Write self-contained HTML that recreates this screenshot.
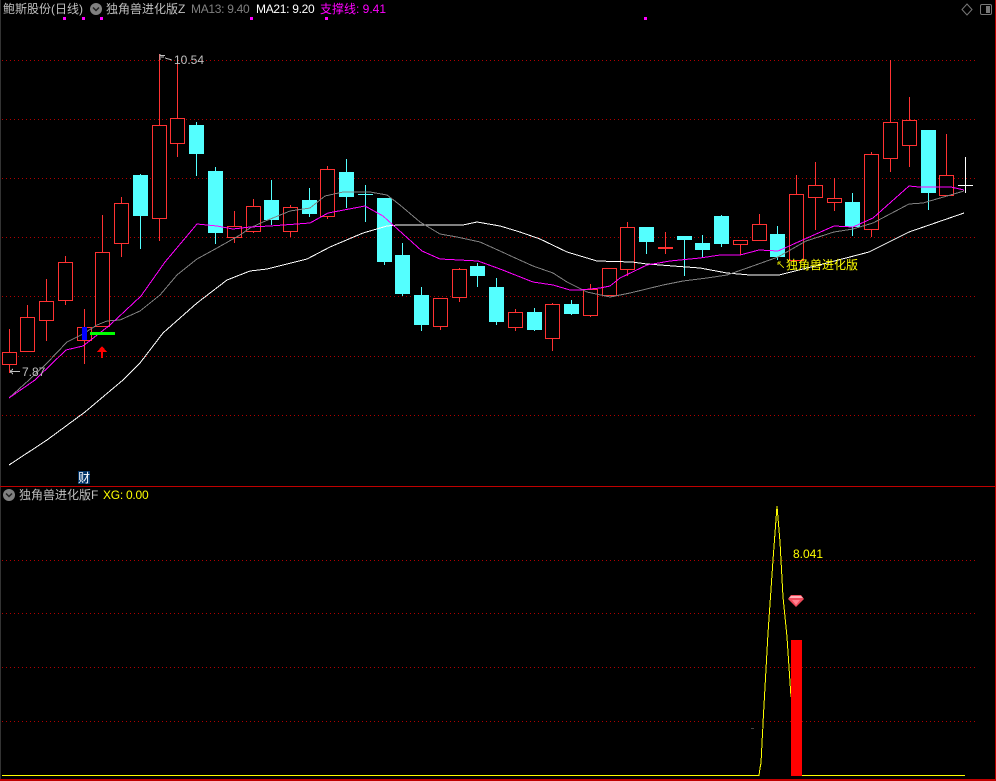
<!DOCTYPE html>
<html><head><meta charset="utf-8">
<style>
html,body{margin:0;padding:0;background:#000;}
body{width:996px;height:781px;overflow:hidden;position:relative;}
svg{position:absolute;left:0;top:0;}
.t{position:absolute;white-space:nowrap;font:12px/14px "Liberation Sans","WenQuanYi Zen Hei","Noto Sans CJK SC",sans-serif;}
.g{color:#c0c0c0}
</style></head><body>
<svg width="996" height="781" viewBox="0 0 996 781" shape-rendering="crispEdges" fill="none">
<rect x="0" y="0" width="1" height="781" fill="#333"/>
<rect x="995" y="0" width="1" height="781" fill="#c00000"/>
<rect x="0" y="486" width="996" height="1" fill="#c00000"/>
<rect x="0" y="779" width="996" height="2" fill="#c00000"/>
<path stroke="#b00000" stroke-dasharray="1 3" d="M2 60.5H975M2 119.5H975M2 178.5H975M2 237.5H975M2 296.5H975M2 356.5H975M2 415.5H975M2 560.5H975M2 613.5H975M2 667.5H975M2 721.5H975"/>
<!-- red candles -->
<g stroke="#ff3232" fill="#000">
<path d="M9.5 329V373M27.5 305V318M46.5 279V341M65.5 256V305M84.5 309V364M102.5 215V253M121.5 197V257M159.5 54V241M177.5 57V157M234.5 211V243M253.5 199V233M290.5 205V237M327.5 166V219M440.5 326V330M459.5 268V302M515.5 309V331M552.5 303V351M590.5 284V317M627.5 222V276M740.5 244V255M759.5 214V225M796.5 175V195M815.5 162V230M834.5 178V211M871.5 152V237M890.5 60V172M909.5 97V167M946.5 134V176M665.5 232V254"/>
<rect x="2.5" y="352.5" width="14" height="12"/><rect x="20.5" y="317.5" width="14" height="34"/><rect x="39.5" y="301.5" width="14" height="19"/><rect x="58.5" y="262.5" width="14" height="38"/><rect x="77.5" y="327.5" width="14" height="13"/><rect x="95.5" y="252.5" width="14" height="74"/><rect x="114.5" y="203.5" width="14" height="40"/><rect x="152.5" y="125.5" width="14" height="93"/><rect x="170.5" y="118.5" width="14" height="25"/><rect x="227.5" y="226.5" width="14" height="11"/><rect x="246.5" y="206.5" width="14" height="25"/><rect x="283.5" y="207.5" width="14" height="24"/><rect x="320.5" y="169.5" width="14" height="47"/><rect x="433.5" y="298.5" width="14" height="28"/><rect x="452.5" y="269.5" width="14" height="28"/><rect x="508.5" y="312.5" width="14" height="15"/><rect x="545.5" y="304.5" width="14" height="34"/><rect x="583.5" y="289.5" width="14" height="26"/><rect x="602.5" y="268.5" width="14" height="27"/><rect x="620.5" y="227.5" width="14" height="42"/><rect x="733.5" y="240.5" width="14" height="4"/><rect x="752.5" y="224.5" width="14" height="16"/><rect x="789.5" y="194.5" width="14" height="66"/><rect x="808.5" y="185.5" width="14" height="12"/><rect x="827.5" y="198.5" width="14" height="4"/><rect x="864.5" y="154.5" width="14" height="75"/><rect x="883.5" y="122.5" width="14" height="36"/><rect x="902.5" y="120.5" width="14" height="25"/><rect x="939.5" y="175.5" width="14" height="20"/>
</g>
<rect x="658" y="247" width="15" height="2" fill="#ff3232"/>
<!-- cyan candles -->
<path stroke="#54ffff" d="M140.5 174V249M196.5 122V176M215.5 167V244M271.5 180V225M309.5 188V217M346.5 159V208M365.5 185V222M358 194.5H373M384.5 198V265M402.5 243V296M421.5 287V331M477.5 263V287M496.5 278V325M534.5 308V331M571.5 300V315M646.5 227V254M684.5 236V276M702.5 235V257M721.5 215V247M777.5 226V260M852.5 193V236M928.5 130V210"/>
<g fill="#54ffff">
<rect x="133" y="175" width="15" height="41"/><rect x="189" y="125" width="15" height="29"/><rect x="208" y="171" width="15" height="62"/><rect x="264" y="200" width="15" height="20"/><rect x="302" y="200" width="15" height="14"/><rect x="339" y="172" width="15" height="25"/><rect x="377" y="198" width="15" height="64"/><rect x="395" y="255" width="15" height="39"/><rect x="414" y="295" width="15" height="30"/><rect x="470" y="266" width="15" height="10"/><rect x="489" y="287" width="15" height="35"/><rect x="527" y="312" width="15" height="18"/><rect x="564" y="304" width="15" height="10"/><rect x="639" y="227" width="15" height="15"/><rect x="677" y="236" width="15" height="4"/><rect x="695" y="243" width="15" height="7"/><rect x="714" y="216" width="15" height="28"/><rect x="770" y="234" width="15" height="23"/><rect x="845" y="202" width="15" height="25"/><rect x="921" y="130" width="15" height="63"/>
</g>
<path stroke="#fff" d="M958 185.5H973M965.5 157V193"/>
<!-- MA lines -->
<polyline stroke="#fff" points="9,465 47,440 85,412 123,380 140,363 163,333 197,303 227,280 250,271 267,269 307,259 330,247 363,233 387,226 398,225 463,225 477,222 500,226 520,232 540,239 567,252 597,261 632,262 647,264 673,266 700,268 727,273 750,275 779,275 819,265 846,258 869,252 909,232 964,213"/>
<polyline stroke="#808080" points="9,398 29,380 47,363 67,342 83,334 97,325 107,321 120,320 140,311 160,295 177,275 197,259 217,248 240,235 250,228 263,222 290,211 310,208 325,196 343,192 370,192 387,195 400,205 420,222 440,234 457,237 480,242 500,251 513,257 533,266 553,273 567,282 587,292 610,297 630,293 663,285 683,281 707,278 727,275 750,267 778,257 806,241 834,232 853,229 873,223 909,204 923,203 964,191"/>
<polyline stroke="#ff00ff" points="9,398 35,380 66,350 83,346 110,325 141,296 165,262 197,224 217,226 233,229 250,227 270,226 310,223 328,213 365,206 383,216 393,225 422,251 440,259 478,261 500,269 533,282 553,285 570,290 580,290 600,288 610,286 620,278 647,265 670,261 700,258 720,255 740,255 759,250 778,251 834,226 853,227 873,218 909,186 919,187 951,187 964,190"/>
<!-- signals -->
<rect x="82" y="327" width="5" height="13" fill="#0000ff"/>
<rect x="90" y="332" width="25" height="3" fill="#00ff00"/>
<path fill="#ff0000" d="M102 346L107 352H97Z"/><rect x="101" y="351" width="2" height="7" fill="#ff0000"/>
<g fill="#ff00ff"><rect x="63" y="17" width="3" height="3"/><rect x="82" y="17" width="3" height="3"/><rect x="100" y="17" width="3" height="3"/><rect x="250" y="17" width="3" height="3"/><rect x="325" y="17" width="3" height="3"/><rect x="644" y="17" width="3" height="3"/></g>
<!-- value arrows -->
<path stroke="#c0c0c0" d="M161 57H164M160 55.5H165M160 54V60M165 58L172 60"/>
<path stroke="#c0c0c0" d="M10 371.5H20M10 371.5L13 369M10 371.5L13 374"/>
<path stroke="#c0c000" d="M778 262L784 268M778 262H781M778 262V265"/>
<!-- lower panel -->
<polyline stroke="#ffff00" points="2,775.5 759,775.5 760,768 761,763 763,723 768,633 773,560 777,506 780,542 783,597 787,637 791,697"/>
<rect x="802" y="775" width="163" height="1" fill="#ffff00"/>
<rect x="791" y="640" width="11" height="136" fill="#ff0000"/>
<rect x="751" y="728" width="3" height="1" fill="#444"/>
<rect x="762" y="728" width="2" height="1" fill="#555500"/>
<g shape-rendering="auto">
<path fill="#f04a5a" d="M791 595H801L804 599L796 607L788 599Z"/>
<path fill="#ffb0b8" d="M791 596H801L803 598H789Z"/>
<path fill="#ff8090" d="M792 600H800L796 605Z"/>
<!-- header icons -->
<circle cx="96" cy="9" r="6" fill="#808080"/><path d="M93 7.500L96 10.500L99 7.500" stroke="#222" stroke-width="1.500"/>
<circle cx="9" cy="495" r="6" fill="#808080"/><path d="M6 493.500L9 496.500L12 493.500" stroke="#222" stroke-width="1.500"/>
<path d="M967 4L972 9.500L967 15L962 9.500Z" stroke="#777"/>
<rect x="980.500" y="4.500" width="11" height="10" rx="1.500" stroke="#777"/><rect x="986" y="6" width="4" height="7" fill="#777"/>
</g>
</svg>
<div class="t g" style="left:3px;top:2px">鲍斯股份(日线)</div>
<div class="t g" style="left:106px;top:2px">独角兽进化版Z</div>
<div class="t" style="left:191px;top:2px;color:#808080;letter-spacing:-.3px">MA13: 9.40</div>
<div class="t" style="left:256px;top:2px;color:#fff;letter-spacing:-.3px">MA21: 9.20</div>
<div class="t" style="left:320px;top:2px;color:#ff00ff">支撑线: 9.41</div>
<div class="t g" style="left:174px;top:53px">10.54</div>
<div class="t g" style="left:22px;top:365px">7.87</div>
<div class="t" style="left:786px;top:258px;color:#ffff00">独角兽进化版</div>
<div class="t" style="left:78px;top:471px;width:12px;height:13px;background:#003366;color:#fff">财</div>
<div class="t g" style="left:19px;top:488px">独角兽进化版F</div>
<div class="t" style="left:103px;top:488px;color:#ffff00;letter-spacing:-.25px">XG: 0.00</div>
<div class="t" style="left:793px;top:547px;color:#ffff00">8.041</div>
</body></html>
